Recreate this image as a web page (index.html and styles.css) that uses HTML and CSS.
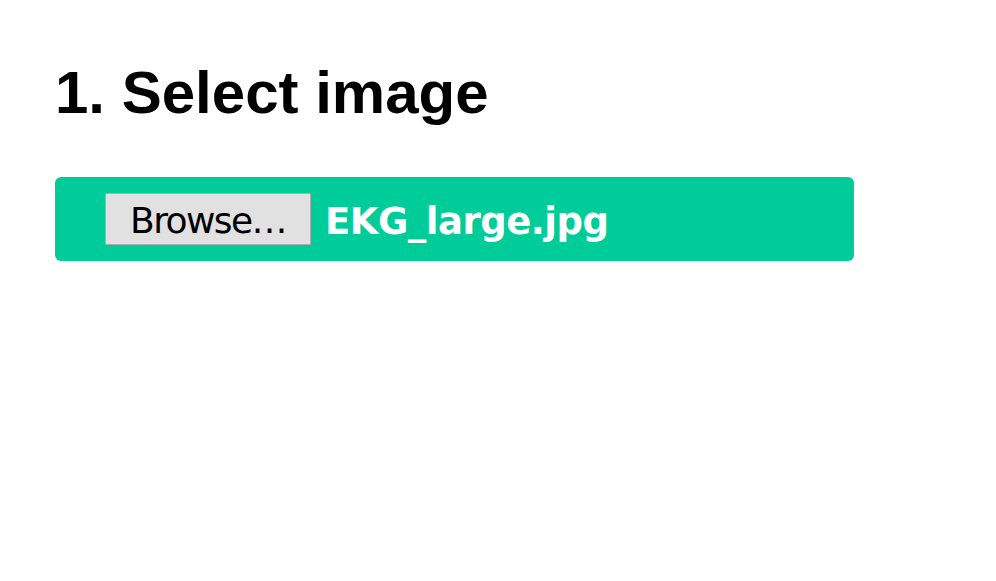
FILE: index.html
```html
<!DOCTYPE html>
<html>
<head>
<meta charset="utf-8">
<link rel="stylesheet" href="styles.css">
</head>
<body>
<main class="page">
  <h1 class="title">1. Select image</h1>
  <div class="picker">
    <span class="browse">Browse…</span>
    <span class="filename">EKG_large.jpg</span>
  </div>
</main>
</body>
</html>
```
FILE: styles.css
```css
html, body {
  margin: 0;
  padding: 0;
  background: #ffffff;
}
.page {
  padding: 58px 0 0 55px;
}
.title {
  margin: 0;
  font-family: "Liberation Sans", Arial, sans-serif;
  font-weight: bold;
  font-size: 60px;
  line-height: 70px;
  color: #000;
}
.picker {
  margin-top: 49px;
  width: 799px;
  height: 84px;
  box-sizing: border-box;
  background: #00cc99;
  border-radius: 6px;
  display: flex;
  align-items: center;
  padding-left: 50px;
}
.browse {
  box-sizing: border-box;
  width: 206px;
  height: 52px;
  padding-top: 3px;
  background: #e1e1e1;
  border: 1px solid #adadad;
  font-family: "DejaVu Sans", sans-serif;
  font-size: 36px;
  color: #000;
  display: flex;
  align-items: center;
  justify-content: center;
  letter-spacing: -1.6px;
}
.filename {
  margin-left: 14px;
  padding-top: 4px;
  font-family: "DejaVu Sans", sans-serif;
  font-weight: bold;
  font-size: 37px;
  color: #fff;
  letter-spacing: -0.5px;
}
```
